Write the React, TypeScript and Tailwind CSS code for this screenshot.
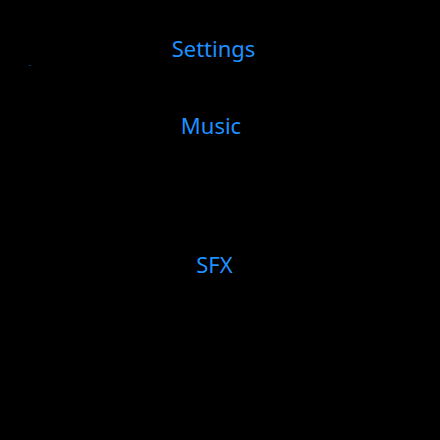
export default function App() {
  return (
    <div
      className="w-[440px] h-[440px] bg-black relative"
      style={{ fontFamily: '"Noto Sans", sans-serif' }}
    >
      <div className="absolute left-[29px] top-[65px] w-[2px] h-[1px] bg-[#0a3a66]" />
      <div className="flex flex-col items-center pt-[33px] text-[#1e90ff] text-[22px] leading-[30px]">
        <div className="pr-[13px]">Settings</div>
        <div className="mt-[47px] pr-[18px]">Music</div>
        <div className="mt-[109px] pr-[11px]">SFX</div>
      </div>
    </div>
  );
}
